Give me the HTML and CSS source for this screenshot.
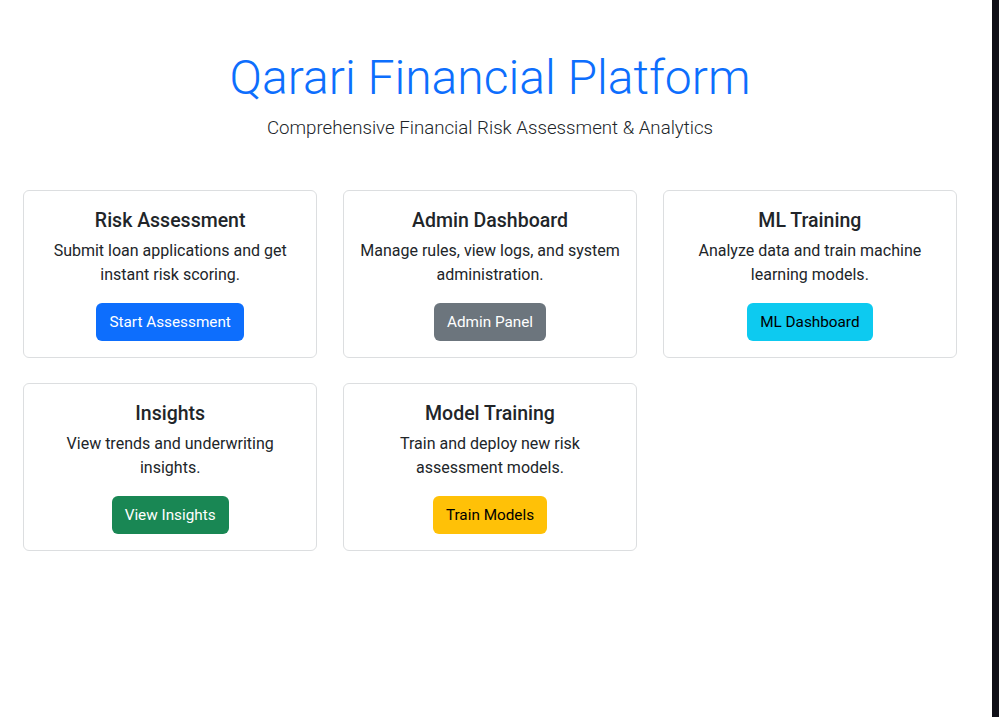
FILE: index.html
```html
<!DOCTYPE html>
<html lang="en">
<head>
<meta charset="utf-8">
<title>Qarari Financial Platform</title>
<link rel="stylesheet" href="styles.css">
</head>
<body>
<div class="page">
  <main class="container">
    <header class="hero">
      <h1 class="hero-title">Qarari Financial Platform</h1>
      <p class="hero-lead">Comprehensive Financial Risk Assessment &amp; Analytics</p>
    </header>
    <section class="cards">
      <div class="card">
        <h5 class="card-title">Risk Assessment</h5>
        <p class="card-text">Submit loan applications and get instant risk scoring.</p>
        <a class="btn btn-primary" href="#">Start Assessment</a>
      </div>
      <div class="card">
        <h5 class="card-title">Admin Dashboard</h5>
        <p class="card-text">Manage rules, view logs, and system administration.</p>
        <a class="btn btn-secondary" href="#">Admin Panel</a>
      </div>
      <div class="card">
        <h5 class="card-title">ML Training</h5>
        <p class="card-text">Analyze data and train machine learning models.</p>
        <a class="btn btn-info" href="#">ML Dashboard</a>
      </div>
      <div class="card">
        <h5 class="card-title">Insights</h5>
        <p class="card-text">View trends and underwriting insights.</p>
        <a class="btn btn-success" href="#">View Insights</a>
      </div>
      <div class="card">
        <h5 class="card-title">Model Training</h5>
        <p class="card-text">Train and deploy new risk assessment models.</p>
        <a class="btn btn-warning" href="#">Train Models</a>
      </div>
    </section>
  </main>
  <div class="edge"></div>
</div>
</body>
</html>
```
FILE: styles.css
```css
html, body {
  margin: 0;
  padding: 0;
  height: 100%;
}
body {
  font-family: Roboto, "Liberation Sans", sans-serif;
  font-size: 16px;
  line-height: 1.5;
  color: #212529;
  background: #fff;
}
.page {
  display: flex;
  min-height: 100%;
}
.container {
  flex: 1;
  padding: 48px 35px 0 23px;
}
.edge {
  width: 7px;
  flex: none;
  background: #0f0f17;
}
.hero {
  text-align: center;
  margin-bottom: 47px;
}
.hero-title {
  margin: 0 0 5px;
  font-size: 48px;
  font-weight: 300;
  line-height: 60px;
  color: #0d6efd;
}
.hero-lead {
  margin: 0;
  font-size: 18.7px;
  font-weight: 300;
  line-height: 30px;
  color: #212529;
}
.cards {
  display: grid;
  grid-template-columns: repeat(3, 1fr);
  column-gap: 25.5px;
  row-gap: 25px;
}
.card {
  border: 1px solid #dcdee0;
  border-radius: 6px;
  padding: 16px;
  text-align: center;
}
.card-title {
  margin: 0 0 6px;
  padding-top: 2px;
  font-size: 19.5px;
  font-weight: 500;
  line-height: 24px;
}
.card-text {
  margin: 0 0 16px;
}
.btn {
  display: inline-block;
  padding: 6px 12px;
  border: 1px solid transparent;
  border-radius: 6px;
  font-size: 15.3px;
  line-height: 24px;
  text-decoration: none;
}
.btn-primary { background: #0d6efd; color: #fff; }
.btn-secondary { background: #6c757d; color: #fff; }
.btn-info { background: #0dcaf0; color: #000; }
.btn-success { background: #198754; color: #fff; }
.btn-warning { background: #ffc107; color: #000; }
```
